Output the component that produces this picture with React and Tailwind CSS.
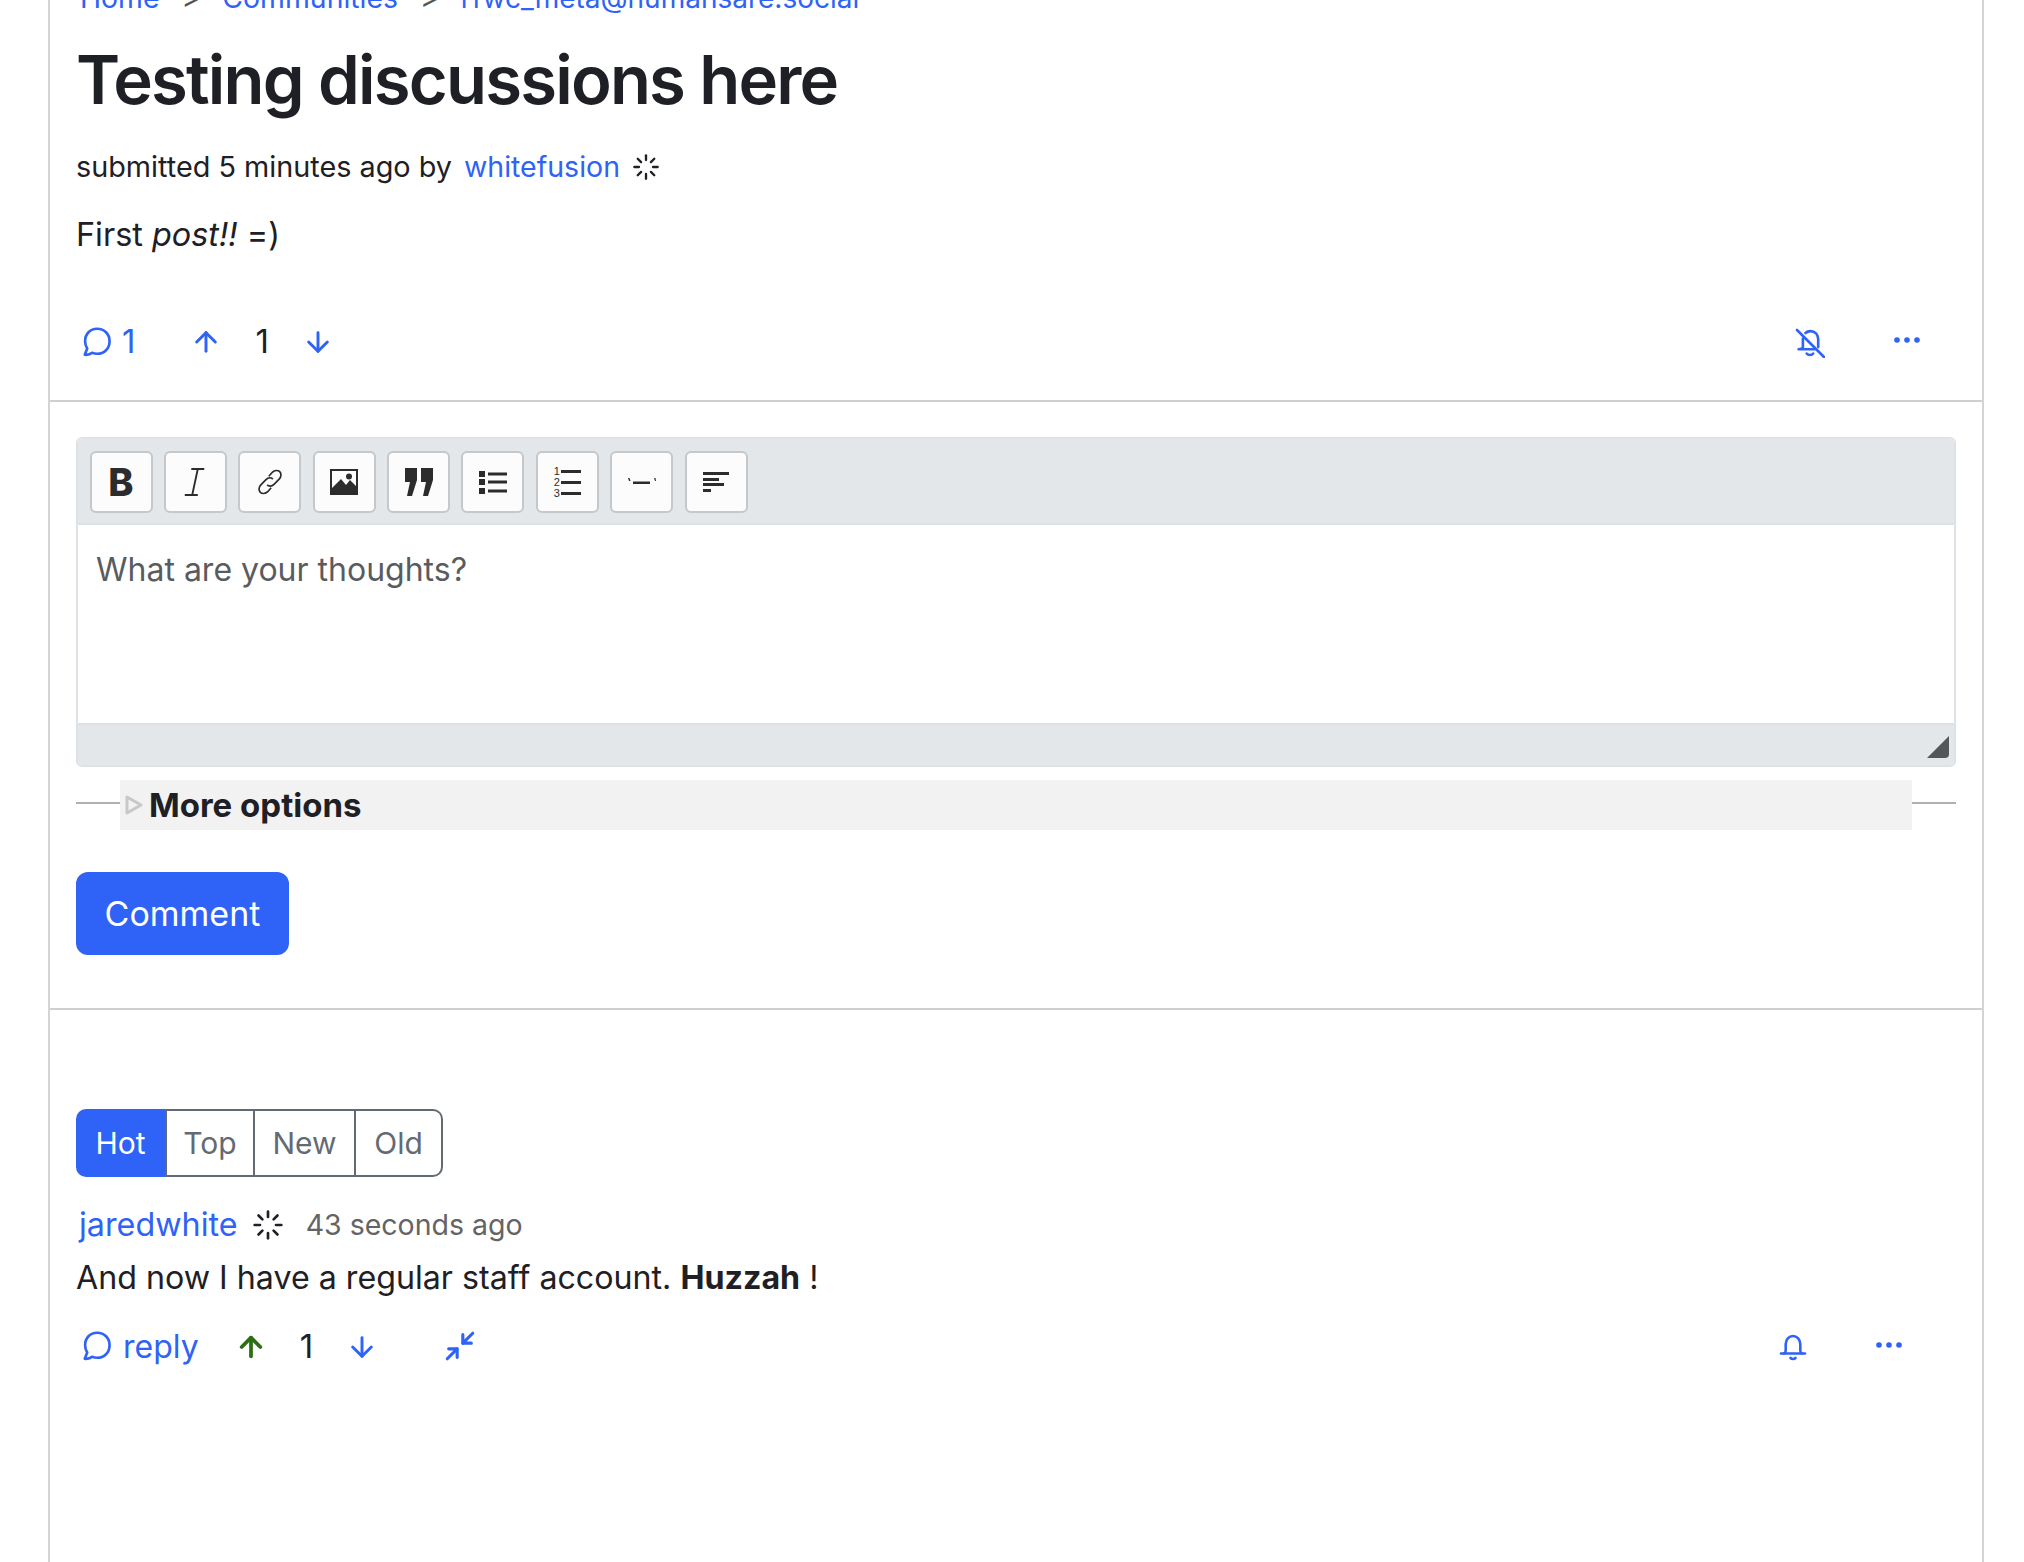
import { ArrowUp, ArrowDown, Loader, Minimize2 } from 'lucide-react';

const BLUE = 'text-[#2f62f6]';

function Bubble({ className }) {
  return (
    <svg viewBox="0 0 28 28" fill="none" stroke="currentColor" strokeWidth="2.4" strokeLinecap="round" strokeLinejoin="round" className={className}>
      <path d="M2.5 26c2.6.2 5-.3 6.6-1.8 1.5.6 3 .9 4.6.9 6.4 0 11.2-4.8 11.2-11.4S20.100 2.500 13.700 2.500 2.800 7.200 2.800 13.700c0 2.700.8 4.700 1.900 6.600L2.500 26z" />
    </svg>
  );
}

function BellOff({ className }) {
  return (
    <svg viewBox="0 0 30 30" fill="none" stroke="currentColor" strokeWidth="2.6" strokeLinecap="round" strokeLinejoin="round" className={className}>
      <path d="M2 2l27 27" />
      <path d="M10.500 5c1.300-1.300 3-1.900 5-1.900 4.500 0 7.700 3.500 7.700 8v8" />
      <path d="M7.900 10.500v8.800c0 1-.9 1.600-4.400 1.900h16.300" />
      <path d="M11.700 25.500c1.500 2 5 2 6.500 0" />
    </svg>
  );
}

function Bell({ className }) {
  return (
    <svg viewBox="0 0 30 30" fill="none" stroke="currentColor" strokeWidth="2.600" strokeLinecap="round" strokeLinejoin="round" className={className}>
      <path d="M3 21.500h24" />
      <path d="M6 21.500c1.300-.6 1.700-1.600 1.700-3v-6.500c0-4.600 3.200-8 7.300-8s7.300 3.400 7.300 8v6.500c0 1.400.4 2.400 1.700 3" />
      <path d="M12.500 26c1.300 1.400 3.700 1.400 5 0" />
    </svg>
  );
}

function Dots() {
  return (
    <svg viewBox="0 0 26 6" fill="currentColor" className="w-[26px] h-[6px]">
      <circle cx="3" cy="3" r="2.800" />
      <circle cx="13" cy="3" r="2.800" />
      <circle cx="23" cy="3" r="2.800" />
    </svg>
  );
}

// iconos de la barra del editor
const toolIcons = [
  <span key="b" className="font-['Inter',sans-serif] font-extrabold text-[38px] leading-none text-[#2c2c2c]">B</span>,
  <svg key="i" viewBox="0 0 28 32" className="w-[26px] h-[32px]" fill="none" stroke="#2c2c2c" strokeWidth="2">
    <path d="M10 2h14M3 30h14M17 2l-6 28" />
  </svg>,
  <svg key="l" viewBox="0 0 28 28" className="w-[32px] h-[32px]" fill="none" stroke="#2c2c2c" strokeWidth="1.500">
    <path d="M13 9l3-3.500c2-2 5-2 6.500-.5s1.500 4.500-.5 6.500l-4.500 4.500c-2 2-4.500 2-6 .5" />
    <path d="M15 19l-3 3.500c-2 2-5 2-6.500.5S4 18.500 6 16.500l4.500-4.500c2-2 4.500-2 6-.5" />
  </svg>,
  <svg key="p" viewBox="0 0 28 26" className="w-[28px] h-[26px]">
    <path d="M0 0h28v26H0z" fill="#2c2c2c" />
    <path d="M2 2h24v15l-6-6-4 5-5-6-9 9z" fill="#fcfcfd" />
    <circle cx="19" cy="7.500" r="3" fill="#2c2c2c" />
  </svg>,
  <svg key="q" viewBox="0 0 28 28" className="w-[28px] h-[28px]" fill="#2c2c2c">
    <path d="M0 0h12v12L7 28H2l3-14H0zM16 0h12v12l-5 16h-5l3-14h-5z" />
  </svg>,
  <svg key="ul" viewBox="0 0 28 24" className="w-[28px] h-[24px]" fill="#2c2c2c">
    <path d="M0 1h6v6H0zM0 9h6v6H0zM0 18h6v6H0zM9 2.500h19v3H9zM9 10.500h19v3H9zM9 19.500h19v3H9z" />
  </svg>,
  <div key="ol" className="flex items-center gap-[1px]">
    <div className="flex flex-col font-['Liberation_Sans',sans-serif] text-[11px] leading-[11px] text-[#2c2c2c]">
      <span>1</span>
      <span>2</span>
      <span>3</span>
    </div>
    <div className="flex flex-col gap-[8px]">
      <div className="w-[20px] h-[3px] bg-[#2c2c2c]" />
      <div className="w-[20px] h-[3px] bg-[#2c2c2c]" />
      <div className="w-[20px] h-[3px] bg-[#2c2c2c]" />
    </div>
  </div>,
  <svg key="hr" viewBox="0 0 28 8" className="w-[28px] h-[8px]" fill="#2c2c2c">
    <path d="M0 0h1.500l1 3H1zM5 3.500h17v2.500H5zM26 0h1.500l.5 3h-1z" />
  </svg>,
  <svg key="al" viewBox="0 0 26 20" className="w-[26px] h-[20px]" fill="#2c2c2c">
    <path d="M0 0h26v3H0zM0 6h16v3H0zM0 11h21v3H0zM0 17h8v3H0z" />
  </svg>,
];

export default function App() {
  return (
    <div className="h-screen overflow-hidden bg-white font-['Inter',sans-serif] text-[#1e2025] text-[32px]">
      <div className="ml-[48px] mr-[40px] h-full border-x-2 border-[#d4d4d4]">

        {/* POST */}
        <div className="px-[26px] h-[402px] border-b-2 border-[#cfcfcf] flex flex-col">
          <div className={`-mt-[17px] h-[30px] flex items-center pl-[4px] text-[28.400px] leading-[30px] ${BLUE}`}>
            <span>Home</span>
            <span className="mx-[22px] text-[#555]">&gt;</span>
            <span>Communities</span>
            <span className="mx-[22px] text-[#555]">&gt;</span>
            <span className="text-[28px]">rfwc_meta@humansare.social</span>
          </div>
          <h1 className="mt-[29px] text-[67px] leading-[76px] tracking-[-1.800px] font-semibold text-[#1e2025]">Testing discussions here</h1>
          <div className="mt-[30px] flex items-center h-[38px] text-[28.800px]">
            <span>submitted 5 minutes ago by</span>
            <span className={`ml-[12px] text-[28.500px] ${BLUE}`}>whitefusion</span>
            <Loader className="ml-[12px] w-[28px] h-[28px] text-[#1e2025]" strokeWidth={2} />
          </div>
          <p className="mt-[27px] h-[44px] leading-[44px] text-[32.400px]">First <em>post!!</em> =)</p>
          <div className="mt-[65px] flex items-center h-[40px] pl-[6px]">
            <Bubble className={`w-[31px] h-[31px] -mt-[2px] ${BLUE}`} />
            <span className={`ml-[9px] text-[33px] ${BLUE}`}>1</span>
            <ArrowUp className={`ml-[55px] w-[32px] h-[32px] ${BLUE}`} strokeWidth={2.200} />
            <span className="ml-[33px] text-[33px]">1</span>
            <ArrowDown className={`ml-[33px] w-[32px] h-[32px] ${BLUE}`} strokeWidth={2.200} />
            <div className={`ml-auto mr-[36px] flex items-center ${BLUE}`}>
              <BellOff className="w-[30px] h-[30px] mt-[2px] -ml-[1px]" />
              <div className="ml-[69px] -mt-[4px]"><Dots /></div>
            </div>
          </div>
        </div>

        {/* EDITOR */}
        <div className="px-[26px] h-[608px] border-b-2 border-[#cfcfcf] pt-[35px]">
          <div className="h-[330px] rounded-[6px] border-2 border-[#dee2e6] flex flex-col overflow-hidden">
            <div className="h-[86px] shrink-0 bg-[#e4e7ea] border-b-2 border-[#dee2e6] flex items-start gap-[11.400px] pl-[11.500px] pt-[12px]">
              {toolIcons.map((icon, i) => (
                <div key={i} className="w-[63px] h-[62px] shrink-0 rounded-[6px] border-2 border-[#c4c8cb] bg-[#fcfcfd] flex items-center justify-center">
                  {icon}
                </div>
              ))}
            </div>
            <div className="flex-1 px-[18px] pt-[26px] text-[#595c5f] leading-[38px]">What are your thoughts?</div>
            <div className="h-[42px] shrink-0 relative bg-[#e4e7ea] border-t-2 border-[#dee2e6]">
              <svg viewBox="0 0 22 22" className="absolute right-[5px] bottom-[7px] w-[22px] h-[22px]">
                <path d="M22 0v18a4 4 0 0 1-4 4H0z" fill="#55565a" />
              </svg>
            </div>
          </div>

          <div className="mt-[13px] h-[50px] flex items-center">
            <div className="w-[44px] h-[2px] bg-[#b0b0b0] -mt-[4px]" />
            <div className="flex-1 h-full bg-[#f2f2f2] flex items-center pl-[5px]">
              <svg viewBox="0 0 18 20" className="w-[18px] h-[20px]" fill="none" stroke="#c8c8c8" strokeWidth="3" strokeLinejoin="round">
                <path d="M2 2l14 8-14 8z" />
              </svg>
              <span className="ml-[6px] font-bold text-[33px] leading-[50px]">More options</span>
            </div>
            <div className="w-[44px] h-[2px] bg-[#b0b0b0] -mt-[4px]" />
          </div>

          <button className="mt-[42px] w-[213px] h-[83px] rounded-[12px] bg-[#2f62f6] text-white text-[34px]">Comment</button>
        </div>

        {/* COMENTARIOS */}
        <div className="px-[26px] pt-[99px]">
          <div className="flex w-[367px] h-[68px] text-[30px] text-[#646a73]">
            <div className="w-[89px] rounded-l-[10px] bg-[#2f62f6] text-white flex items-center justify-center">Hot</div>
            <div className="w-[90px] border-2 border-[#646a73] flex items-center justify-center">Top</div>
            <div className="w-[101px] border-y-2 border-r-2 border-[#646a73] flex items-center justify-center">New</div>
            <div className="flex-1 rounded-r-[10px] border-y-2 border-r-2 border-[#646a73] flex items-center justify-center">Old</div>
          </div>

          <div className="mt-[26px] flex items-center h-[44px] pl-[3px]">
            <span className={`text-[32.300px] ${BLUE}`}>jaredwhite</span>
            <Loader className="ml-[14px] w-[32px] h-[32px] text-[#1e2025]" strokeWidth={2} />
            <span className="ml-[22px] text-[28.500px] text-[#646464]">43 seconds ago</span>
          </div>
          <p className="mt-[9px] h-[44px] leading-[44px] text-[32.200px]">And now I have a regular staff account. <strong className="font-bold">Huzzah</strong> !</p>

          <div className="mt-[27px] flex items-center h-[40px] pl-[6px]">
            <Bubble className={`w-[31px] h-[31px] -mt-[3px] ${BLUE}`} />
            <span className={`ml-[10px] ${BLUE}`}>reply</span>
            <ArrowUp className="ml-[36px] w-[32px] h-[32px] text-[#2a7012]" strokeWidth={2.800} />
            <span className="ml-[33px] text-[33px]">1</span>
            <ArrowDown className={`ml-[33px] w-[32px] h-[32px] ${BLUE}`} strokeWidth={2.200} />
            <Minimize2 className={`ml-[65px] -mt-[3px] w-[34px] h-[34px] ${BLUE}`} strokeWidth={2.200} />
            <div className={`ml-auto mr-[54px] flex items-center ${BLUE}`}>
              <Bell className="w-[30px] h-[30px]" />
              <div className="ml-[68px] -mt-[4px]"><Dots /></div>
            </div>
          </div>
        </div>

      </div>
    </div>
  );
}
